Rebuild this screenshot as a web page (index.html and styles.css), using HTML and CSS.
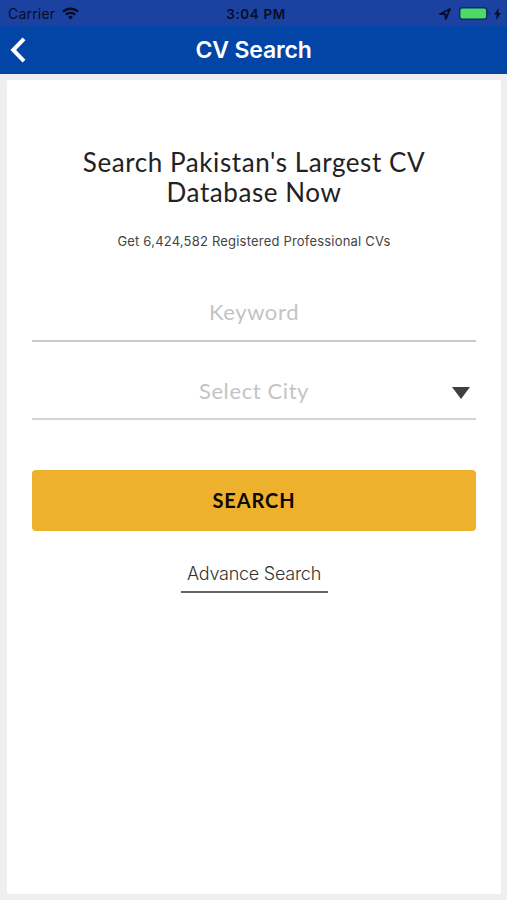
FILE: index.html
```html
<!doctype html>
<html lang="en">
  <head>
    <meta charset="UTF-8" />
    <meta name="viewport" content="width=device-width, initial-scale=1.0" />
    <title>CV Search</title>
    <link rel="stylesheet" href="styles.css">
  </head>
  <body>
    <div class="status-bar">
      <div class="status-left">
        <span class="carrier">Carrier</span>
        <svg class="wifi" width="17" height="13" viewBox="0 0 17 13" fill="none" stroke="#070e24" stroke-width="2.3">
          <path d="M1 4.8a10.7 10.7 0 0 1 15 0" />
          <path d="M3.7 7.8a6.8 6.8 0 0 1 9.6 0" />
          <path d="M8.5 12.4 6.1 10a3.4 3.4 0 0 1 4.8 0z" fill="#070e24" stroke="none" />
        </svg>
      </div>
      <span class="time">3:04 PM</span>
      <div class="status-right">
        <svg class="location" width="12" height="12" viewBox="0 0 12 12" fill="none" stroke="#070e24" stroke-width="1.8" stroke-linejoin="round">
          <path d="M1 6 11 1 6.8 11 6.2 6.2z" />
        </svg>
        <svg class="battery" width="32" height="13" viewBox="0 0 32 13">
          <rect x="0.7" y="0.7" width="27" height="11.6" rx="2.5" fill="#4cd964" stroke="#0b2c6c" stroke-width="1.4" />
          <path d="M29.8 4.7v3.6q1.3-.6 1.3-1.8t-1.3-1.8z" fill="#0b2c6c" />
        </svg>
        <svg class="bolt" width="7" height="12" viewBox="0 0 7 12" fill="#070e24">
          <path d="M4.8 0 0 6.6h2.8L2 12l5-7H4.1z" />
        </svg>
      </div>
    </div>

    <header>
      <a href="#" class="back" aria-label="Back">
        <svg width="16" height="26" viewBox="0 0 16 26" fill="none" stroke="#fff" stroke-width="4">
          <path d="M14 1.8 3.2 13 14 24.2" />
        </svg>
      </a>
      <h1>CV Search</h1>
    </header>

    <main class="card">
      <h2>Search Pakistan's Largest CV<br>Database Now</h2>
      <p class="count">Get 6,424,582 Registered Professional CVs</p>

      <div class="field keyword"><span>Keyword</span></div>
      <div class="field city">
        <span>Select City</span>
        <svg class="caret" width="18" height="12" viewBox="0 0 18 12" fill="#3f3f3f">
          <path d="M0 0h18L9 12z" />
        </svg>
      </div>

      <button class="btn">SEARCH</button>
      <a href="#" class="advance">Advance Search</a>
    </main>
  </body>
</html>
```

FILE: styles.css
```css
* {
  box-sizing: border-box;
  margin: 0;
  padding: 0;
}
body {
  height: 900px;
  display: flex;
  flex-direction: column;
  font-family: Inter, 'Liberation Sans', sans-serif;
  background: #efeff2;
  color: #222;
  overflow: hidden;
}
svg {
  display: block;
}
.status-bar {
  height: 26px;
  display: grid;
  grid-template-columns: 1fr auto 1fr;
  align-items: center;
  padding: 1px 6px 0 8px;
  background: #1b41a1;
  color: #070e24;
  font-size: 14px;
}
.status-left,
.status-right {
  display: flex;
  align-items: center;
}
.carrier {
  letter-spacing: 0.2px;
}
.wifi {
  margin-left: 7px;
}
.time {
  padding-left: 3px;
  font-size: 13.5px;
  font-weight: 600;
  letter-spacing: 0.6px;
}
.status-right {
  justify-content: flex-end;
}
.battery {
  margin: 0 3px 0 8px;
}
header {
  height: 48px;
  display: grid;
  grid-template-columns: 40px 1fr 40px;
  align-items: center;
  background: #0345a6;
}
.back {
  padding-left: 10px;
}
header h1 {
  color: #fff;
  font-size: 23px;
  font-weight: 600;
  letter-spacing: -0.15px;
  text-align: center;
}
.card {
  flex: 1;
  display: flex;
  flex-direction: column;
  align-items: center;
  margin: 6px 6px 6px 7px;
  padding: 67px 25px 0;
  background: #fff;
  border-radius: 2px;
}
h2 {
  font-family: Lato, sans-serif;
  font-size: 26px;
  font-weight: 400;
  letter-spacing: 0.58px;
  line-height: 30px;
  text-align: center;
}
.count {
  margin-top: 24px;
  color: #444;
  font-size: 13px;
  letter-spacing: 0.2px;
  line-height: 20px;
}
.field {
  width: 100%;
  display: flex;
  justify-content: center;
  border-bottom: 2px solid #c9c9c9;
  color: #c4c4c4;
  font-family: Lato, sans-serif;
  font-size: 22px;
  font-weight: 400;
  letter-spacing: 0.6px;
  line-height: 28px;
  position: relative;
}
.keyword {
  height: 44px;
  margin-top: 47px;
}
.city {
  height: 43px;
  margin-top: 35px;
  border-color: #d4d4d4;
}
.caret {
  position: absolute;
  top: 10px;
  right: 6px;
}
.btn {
  width: 100%;
  height: 61px;
  margin-top: 50px;
  padding-bottom: 2px;
  border: none;
  border-radius: 4px;
  background: #edb12d;
  color: #0c0903;
  font-family: Lato, sans-serif;
  font-size: 20px;
  font-weight: 700;
  letter-spacing: 0.9px;
}
.advance {
  width: 147px;
  height: 35px;
  margin-top: 27px;
  border-bottom: 2px solid #666;
  color: #333;
  font-size: 18px;
  font-weight: 300;
  letter-spacing: -0.25px;
  line-height: 31px;
  text-align: center;
  text-decoration: none;
}
```
